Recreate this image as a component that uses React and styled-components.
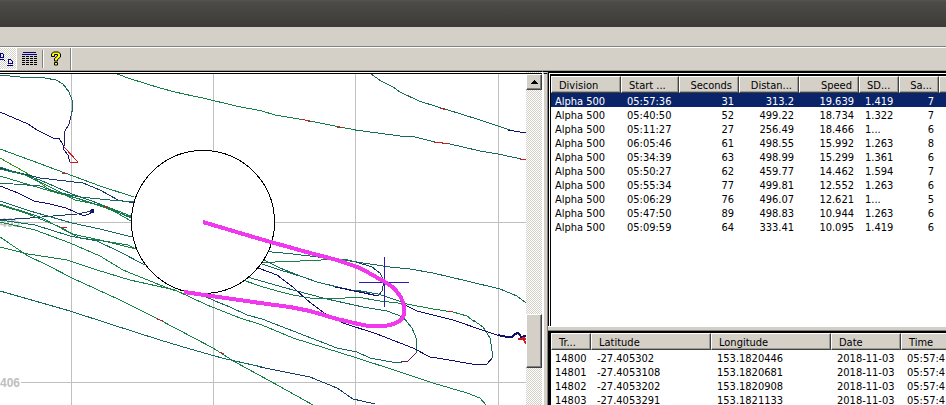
import React from "react";
import styled, { createGlobalStyle } from "styled-components";

const face = "#d4d0c8";

const GlobalStyle = createGlobalStyle`
  * { box-sizing: border-box; }
  body {
    margin: 0;
    background: ${face};
    font-family: "DejaVu Sans Condensed", "DejaVu Sans", sans-serif;
    font-size: 11px;
    color: #000;
  }
`;

const Window = styled.div`
  display: flex;
  flex-direction: column;
  height: 100vh;
  overflow: hidden;
`;

const TitleBar = styled.header`
  flex: 0 0 27px;
  background: linear-gradient(#56554f 0, #4c4b47 2px, #3c3b37 100%);
`;

const MenuBar = styled.div`
  flex: 0 0 20px;
  border-bottom: 1px solid #808080;
`;

const Toolbar = styled.div`
  display: flex;
  flex: 0 0 24px;
  border-top: 1px solid #fff;
  border-bottom: 1px solid #a09c94;
`;

const ToolGroup = styled.div`
  display: flex;
  align-items: center;
  width: 71px;
  border-right: 1px solid #808080;
  box-shadow: 1px 0 #fff;
`;

const ToolButton = styled.button`
  display: flex;
  align-items: center;
  justify-content: ${(p) => (p.$pressed ? "flex-start" : "center")};
  width: ${(p) => (p.$pressed ? 17 : 25)}px;
  height: 22px;
  padding: 0;
  border: 0;
  border-right: 1px solid ${(p) => (p.$pressed ? "#fff" : "transparent")};
  border-bottom: 1px solid ${(p) => (p.$pressed ? "#fff" : "transparent")};
  background: ${(p) =>
    p.$pressed
      ? "repeating-conic-gradient(#fff 0 25%, #d4d0c8 0 50%) 0 0 / 2px 2px"
      : "transparent"};
`;

const ToolDivider = styled.span`
  width: 2px;
  height: 18px;
  border-left: 1px solid #808080;
  border-right: 1px solid #fff;
`;

const Workspace = styled.main`
  display: grid;
  flex: 1;
  min-height: 0;
  grid-template-columns: minmax(0, 526fr) 16px 6px minmax(0, 398fr);
`;

const MapPane = styled.section`
  min-width: 0;
  min-height: 0;
  border-top: 3px double #000;
  background: #fff;
  overflow: hidden;
`;

const MapDrawing = styled.svg`
  display: block;
  width: 100%;
  height: 100%;
`;

const ScrollBar = styled.div`
  display: grid;
  grid-template-rows: 16px 224fr 54px 37fr;
  min-height: 0;
  border-top: 3px double #000;
  background: repeating-conic-gradient(#fff 0 25%, #d4d0c8 0 50%) 0 0 / 2px 2px;
`;

const ScrollPart = styled.button`
  display: flex;
  align-items: center;
  justify-content: center;
  grid-row: ${(p) => p.$row};
  padding: 0;
  border: 1px solid;
  border-color: #fff #404040 #404040 #fff;
  box-shadow: inset -1px -1px #808080;
  background: ${face};
`;

const Splitter = styled.div`
  border-top: 3px double #000;
  border-left: 2px solid #fff;
  border-right: 1px solid #808080;
`;

const Lists = styled.section`
  display: grid;
  grid-template-rows: minmax(0, 255fr) 5px minmax(0, 74fr);
  min-width: 0;
  min-height: 0;
`;

const ListGap = styled.div`
  border-top: 1px solid #fff;
  border-bottom: 1px solid #808080;
`;

const ListPane = styled.div`
  min-width: 0;
  overflow: hidden;
  background: #fff;
  border-left: 3px ${(p) => (p.$double ? "double" : "solid")} #000;
  border-top: ${(p) => (p.$double ? "5px double" : "2px solid")} #000;
`;

const ListTable = styled.table`
  width: ${(p) => p.$width}px;
  table-layout: fixed;
  border-collapse: separate;
  border-spacing: 0;
`;

const Column = styled.col`
  width: ${(p) => p.$width}px;
`;

const HeadCell = styled.th`
  height: 17px;
  padding: 2px 6px 0 7px;
  overflow: hidden;
  border: 1px solid;
  border-color: #fff #404040 #404040 #fff;
  box-shadow: inset -1px -1px #a09c94;
  background: ${face};
  font-weight: 400;
  line-height: 13px;
  white-space: nowrap;
  text-align: ${(p) => (p.$right ? "right" : "left")};
`;

const Cell = styled.td`
  height: 14px;
  padding: 3px 5px 0 6px;
  line-height: 11px;
  white-space: nowrap;
  text-align: ${(p) => (p.$right ? "right" : "left")};
  &:first-child { padding-left: 4px; }
`;

const Row = styled.tr`
  color: ${(p) => (p.$selected ? "#fff" : "#000")};
  background: ${(p) => (p.$selected ? "#0a246a" : "transparent")};
`;

const GridLine = styled.path`
  fill: none;
  stroke: #c0c0c0;
  shape-rendering: crispEdges;
`;

const Track = styled.polyline`
  fill: none;
  stroke: ${(p) => p.$color};
  stroke-width: ${(p) => p.$weight || 1}px;
  stroke-linejoin: round;
  shape-rendering: crispEdges;
`;

const MapLabel = styled.text`
  fill: #c0c0c0;
  font: bold 12px "Liberation Sans", sans-serif;
`;

const green = "#168048";
const teal = "#176a5c";
const navy = "#10106c";
const slate = "#183c68";
const red = "#d01820";

const tracks = [
  [teal, "0,75 20,77 45,78 56,80 63,84 69,92 72,100 73,107 71,116"],
  ["#301868", "71,116 69,124 65,131 64,137 64,146"],
  [red, "64,147 78,162 70,162"],
  [navy, "70,162 68,155 64,150 63,145 59,138 53,138 45,134 37,130 28,124 14,118 0,112"],
  [green, "117,74 131,79 160,88 175,92 193,96 203,98 236,106 262,111 275,115 305,120 340,127 356,130"],
  [teal, "355,130 400,136 415,137 435,142 450,144 480,151 498,154 526,160"],
  [teal, "371,74 381,81 393,87 400,92 419,101 438,107 461,114 480,120 498,126 510,130"],
  [navy, "508,130 520,132 526,132"],
  [green, "0,149 30,160 65,173 100,186 134,197"],
  ["#309818", "0,158 30,175 50,190 72,196"],
  [green, "70,196 100,206 131,217"],
  [slate, "0,168 40,178 83,183 100,190 118,200 134,203"],
  [teal, "0,167 40,180 72,194 100,204 131,218"],
  [green, "0,176 50,191 80,199 110,209 131,221"],
  [teal, "0,183 40,186 56,192 80,197 110,200 134,202"],
  [green, "0,169 25,175 50,187 75,200 105,206 131,216"],
  [navy, "0,186 18,193 34,201 50,204 66,208 84,216 91,213"],
  [navy, "91,210 93,210 93,212 91,212 91,210", 2],
  [slate, "0,220 30,218 77,214 92,211"],
  [teal, "0,201 30,211 72,223 100,229 132,237"],
  [green, "0,204 40,217 72,234 100,240 136,249"],
  [green, "0,205 28,214 60,227 80,238 110,242 128,245 136,249"],
  [teal, "0,220 35,225 70,236 97,241 120,252 145,265"],
  [green, "0,222 35,230 70,243 100,256 123,270 160,285 176,291"],
  [green, "0,247 28,254 67,260 97,270 130,280 175,290 207,305 240,318 262,325 293,338 357,358 400,372 433,383 467,393 480,398 486,405"],
  [green, "0,237 28,256 47,265 72,278 120,300 158,319 213,348 235,362 270,381 313,405"],
  [teal, "0,291 70,311 110,324 160,340 190,349 222,358 235,361 262,367"],
  [slate, "260,367 310,377 337,388 353,399 375,404"],
  [teal, "200,294 215,301 230,307 247,315 262,319 293,331 337,348 357,352 370,358 397,363 408,361"],
  ["#601848", "401,362 408,361 416,353"],
  [teal, "416,353 417,340 412,328 403,317 387,311 363,307 327,299 293,290 240,275"],
  [teal, "262,251 293,254 343,260 390,267 410,269 433,273 467,281 500,289 517,296 526,303"],
  [green, "250,263 300,261 343,259 357,262"],
  [slate, "356,262 372,267 380,273 384,281 382,291 378,296 370,294 337,287"],
  [teal, "338,287 317,282 300,276 280,268 260,258"],
  [teal, "250,260 280,270 303,277 317,282 337,287"],
  [navy, "335,287 378,296"],
  [teal, "355,290 378,294 402,302 410,305"],
  [green, "240,279 260,286 277,291 293,295 310,298 345,298 357,297 380,301 407,304 433,309 453,312 467,316 475,322"],
  [teal, "473,320 483,327 490,338 493,357 490,361"],
  [navy, "492,358 487,364 472,364 443,359 430,357 413,348 400,343 377,334 343,323 327,315 307,300 293,287 277,275 250,265"],
  [navy, "403,304 417,311 453,320 485,331 500,336"],
  [navy, "498,335 507,337 512,337 515,334 518,333 520,335 521,337 526,336", 2],
  [red, "518,339 526,339 523,338 526,344", 2],
  [red, "62,173 67,174"],
  [red, "61,227 67,228"],
  [red, "104,206 108,208"],
  [red, "157,319 163,321"],
  [red, "220,352 224,354"],
  [red, "302,119 311,122"],
  [red, "337,127 343,128"],
  [red, "434,142 449,144"],
  [red, "440,108 446,110"],
  [red, "448,311 453,312"],
  [red, "520,159 526,160"],
];

function TrackMap() {
  return (
    <MapDrawing
      viewBox="0 74 526 331"
      preserveAspectRatio="xMidYMid slice"
      role="img"
      aria-label="GPS track map"
    >
      <GridLine d="M71.5 74V405M213.5 74V405M355.5 74V405M498.5 74V405M21 222.5H526M21 382.5H526" />
      <MapLabel x="0" y="227">405</MapLabel>
      <MapLabel x="0" y="387">406</MapLabel>
      {tracks.map(([color, points, weight], i) => (
        <Track key={i} $color={color} $weight={weight} points={points} />
      ))}
      <circle cx="203" cy="222" r="71.5" fill="#fff" stroke="#000" shapeRendering="crispEdges" />
      <path d="M384.5 257V307M359 282.5H409" stroke="#2c1cae" />
      <path
        d="M203 222L260 239L310 253L337 260L360 268L385 282Q398 289 403 302Q406 313 402 319Q396 325 383 326Q372 327 363 325L337 319L310 311L290 307L260 303L184 292"
        fill="none"
        stroke="#f238ee"
        strokeWidth="4"
        shapeRendering="crispEdges"
      />
    </MapDrawing>
  );
}

const PlotIcon = () => (
  <svg width="16" height="20" viewBox="0 0 16 20" shapeRendering="crispEdges" aria-hidden="true">
    <path d="M0 4.5H2.5L3.5 5.5V8.5H.5V4M0 10.5H4M8.5 10.5H10.5L12.5 12.5V14.5H8.5ZM7 16.5H13" fill="none" stroke="#000080" />
    <path d="M4 11h1v1H4Z" fill="#000080" />
  </svg>
);

const TableIcon = () => (
  <svg width="17" height="16" viewBox="0 0 17 16" shapeRendering="crispEdges" aria-hidden="true">
    <path d="M2 1.5H15M1 3.5H16" stroke="#000080" />
    <path d="M1 5.5H16M1 7.5H16M1 9.5H16M1 11.5H16M1 13.5H16" stroke="#000" strokeDasharray="3 1" />
  </svg>
);

const HelpIcon = () => (
  <svg width="12" height="16" viewBox="0 0 12 16" aria-hidden="true">
    <path
      d="M1.5 3L3.5 1H8.5L10.5 3V6L7.5 8.5V10H4.5V7.5L7.5 5V3.5H4.5V5.5H1.5ZM4.5 11.5H7.5V14H4.5Z"
      fill="#ffff00"
      stroke="#000"
    />
  </svg>
);

const UpArrow = () => (
  <svg width="8" height="4" viewBox="0 0 8 4" shapeRendering="crispEdges" aria-hidden="true">
    <path d="M0 4L4 0L8 4Z" />
  </svg>
);

const runColumns = [
  ["Division", 70], ["Start ...", 58], ["Seconds", 60, true], ["Distan...", 60, true],
  ["Speed", 60, true], ["SD...", 40], ["Sa...", 40, true], ["", 60],
];

const runs = [
  ["05:57:36", "31", "313.2", "19.639", "1.419", "7"],
  ["05:40:50", "52", "499.22", "18.734", "1.322", "7"],
  ["05:11:27", "27", "256.49", "18.466", "1...", "6"],
  ["06:05:46", "61", "498.55", "15.992", "1.263", "8"],
  ["05:34:39", "63", "498.99", "15.299", "1.361", "6"],
  ["05:50:27", "62", "459.77", "14.462", "1.594", "7"],
  ["05:55:34", "77", "499.81", "12.552", "1.263", "6"],
  ["05:06:29", "76", "496.07", "12.621", "1...", "5"],
  ["05:47:50", "89", "498.83", "10.944", "1.263", "6"],
  ["05:09:59", "64", "333.41", "10.095", "1.419", "6"],
].map((run) => ["Alpha 500", ...run, ""]);

const pointColumns = [["Tr...", 40], ["Latitude", 120], ["Longitude", 120], ["Date", 70], ["Time", 70]];

const points = [
  ["14800", "-27.405302", "153.1820446"],
  ["14801", "-27.4053108", "153.1820681"],
  ["14802", "-27.4053202", "153.1820908"],
  ["14803", "-27.4053291", "153.1821133"],
].map((point) => [...point, "2018-11-03", "05:57:4"]);

function List({ label, columns, rows, selected }) {
  return (
    <ListTable aria-label={label} $width={columns.reduce((sum, c) => sum + c[1], 0)}>
      <colgroup>
        {columns.map(([name, width]) => <Column key={name} $width={width} />)}
      </colgroup>
      <thead>
        <tr>
          {columns.map(([name, , right]) => <HeadCell key={name} $right={right}>{name}</HeadCell>)}
        </tr>
      </thead>
      <tbody>
        {rows.map((row, r) => (
          <Row key={r} $selected={r === selected}>
            {row.map((value, c) => <Cell key={c} $right={columns[c][2]}>{value}</Cell>)}
          </Row>
        ))}
      </tbody>
    </ListTable>
  );
}

export default function App() {
  return (
    <Window>
      <GlobalStyle />
      <TitleBar />
      <MenuBar />
      <Toolbar>
        <ToolGroup>
          <ToolButton $pressed aria-label="Plot points" aria-pressed="true"><PlotIcon /></ToolButton>
          <ToolButton aria-label="Show table"><TableIcon /></ToolButton>
          <ToolDivider />
          <ToolButton aria-label="Help"><HelpIcon /></ToolButton>
        </ToolGroup>
      </Toolbar>
      <Workspace>
        <MapPane><TrackMap /></MapPane>
        <ScrollBar>
          <ScrollPart $row={1} aria-label="Scroll up"><UpArrow /></ScrollPart>
          <ScrollPart $row={3} aria-label="Scroll position" />
        </ScrollBar>
        <Splitter />
        <Lists>
          <ListPane $double>
            <List label="Runs" columns={runColumns} rows={runs} selected={0} />
          </ListPane>
          <ListGap />
          <ListPane>
            <List label="Track points" columns={pointColumns} rows={points} />
          </ListPane>
        </Lists>
      </Workspace>
    </Window>
  );
}
